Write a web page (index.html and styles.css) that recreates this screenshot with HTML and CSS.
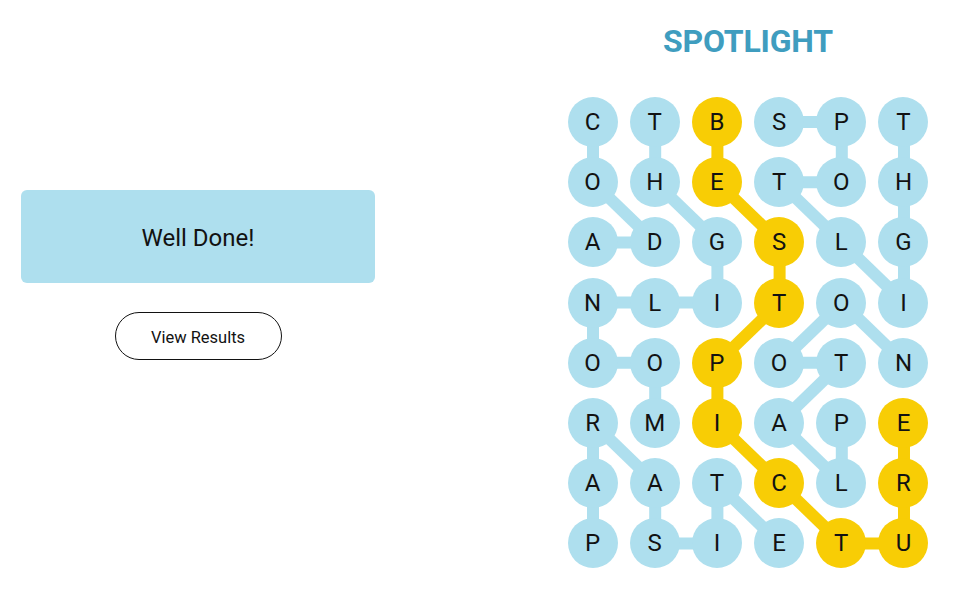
FILE: index.html
```html
<!DOCTYPE html>
<html lang="en">
<head>
    <meta charset="UTF-8">
    <meta name="viewport" content="width=device-width, initial-scale=1.0">
    <title>Strands - Spotlight</title>
    <link rel="stylesheet" href="styles.css">
</head>
<body>
    <div class="game">
        <div class="side">
            <div class="banner">Well Done!</div>
            <button class="btn-results">View Results</button>
        </div>

        <div class="board-wrap">
            <h1 class="theme">SPOTLIGHT</h1>
            <div class="board">
                <svg class="links" width="360" height="470" viewBox="0 0 360 470">
                    <g class="word">
                        <!-- CODA -->
                        <line x1="25" y1="25" x2="25" y2="85.2"/>
                        <line x1="25" y1="85.2" x2="87.2" y2="145.4"/>
                        <line x1="87.2" y1="145.4" x2="25" y2="145.4"/>
                        <!-- MOONLIGHT -->
                        <line x1="87.2" y1="326" x2="87.2" y2="265.8"/>
                        <line x1="87.2" y1="265.8" x2="25" y2="265.8"/>
                        <line x1="25" y1="265.8" x2="25" y2="205.6"/>
                        <line x1="25" y1="205.6" x2="149.4" y2="205.6"/>
                        <line x1="149.4" y1="205.6" x2="149.4" y2="145.4"/>
                        <line x1="149.4" y1="145.4" x2="87.2" y2="85.2"/>
                        <line x1="87.2" y1="85.2" x2="87.2" y2="25"/>
                        <!-- SPOTLIGHT -->
                        <line x1="211.6" y1="25" x2="273.8" y2="25"/>
                        <line x1="273.8" y1="25" x2="273.8" y2="85.2"/>
                        <line x1="273.8" y1="85.2" x2="211.6" y2="85.2"/>
                        <line x1="211.6" y1="85.2" x2="273.8" y2="145.4"/>
                        <line x1="273.8" y1="145.4" x2="336" y2="205.6"/>
                        <line x1="336" y1="205.6" x2="336" y2="25"/>
                        <!-- PARASITE -->
                        <line x1="25" y1="446.4" x2="25" y2="326"/>
                        <line x1="25" y1="326" x2="87.2" y2="386.2"/>
                        <line x1="87.2" y1="386.2" x2="87.2" y2="446.4"/>
                        <line x1="87.2" y1="446.4" x2="149.4" y2="446.4"/>
                        <line x1="149.4" y1="446.4" x2="149.4" y2="386.2"/>
                        <line x1="149.4" y1="386.2" x2="211.6" y2="446.4"/>
                        <!-- PLATOON -->
                        <line x1="273.8" y1="326" x2="273.8" y2="386.2"/>
                        <line x1="273.8" y1="386.2" x2="211.6" y2="326"/>
                        <line x1="211.6" y1="326" x2="273.8" y2="265.8"/>
                        <line x1="273.8" y1="265.8" x2="211.6" y2="265.8"/>
                        <line x1="211.6" y1="265.8" x2="273.8" y2="205.6"/>
                        <line x1="273.8" y1="205.6" x2="336" y2="265.8"/>
                    </g>
                    <g class="spangram">
                        <!-- BESTPICTURE -->
                        <line x1="149.4" y1="25" x2="149.4" y2="85.2"/>
                        <line x1="149.4" y1="85.2" x2="211.6" y2="145.4"/>
                        <line x1="211.6" y1="145.4" x2="211.6" y2="205.6"/>
                        <line x1="211.6" y1="205.6" x2="149.4" y2="265.8"/>
                        <line x1="149.4" y1="265.8" x2="149.4" y2="326"/>
                        <line x1="149.4" y1="326" x2="273.8" y2="446.4"/>
                        <line x1="273.8" y1="446.4" x2="336" y2="446.4"/>
                        <line x1="336" y1="446.4" x2="336" y2="326"/>
                    </g>
                </svg>

                <span class="cell">C</span><span class="cell">T</span><span class="cell gold">B</span><span class="cell">S</span><span class="cell">P</span><span class="cell">T</span>
                <span class="cell">O</span><span class="cell">H</span><span class="cell gold">E</span><span class="cell">T</span><span class="cell">O</span><span class="cell">H</span>
                <span class="cell">A</span><span class="cell">D</span><span class="cell">G</span><span class="cell gold">S</span><span class="cell">L</span><span class="cell">G</span>
                <span class="cell">N</span><span class="cell">L</span><span class="cell">I</span><span class="cell gold">T</span><span class="cell">O</span><span class="cell">I</span>
                <span class="cell">O</span><span class="cell">O</span><span class="cell gold">P</span><span class="cell">O</span><span class="cell">T</span><span class="cell">N</span>
                <span class="cell">R</span><span class="cell">M</span><span class="cell gold">I</span><span class="cell">A</span><span class="cell">P</span><span class="cell gold">E</span>
                <span class="cell">A</span><span class="cell">A</span><span class="cell">T</span><span class="cell gold">C</span><span class="cell">L</span><span class="cell gold">R</span>
                <span class="cell">P</span><span class="cell">S</span><span class="cell">I</span><span class="cell">E</span><span class="cell gold">T</span><span class="cell gold">U</span>
            </div>
        </div>
    </div>
</body>
</html>
```

FILE: styles.css
```css
* {
    margin: 0;
    padding: 0;
    box-sizing: border-box;
}

body {
    font-family: Roboto, "Liberation Sans", Arial, sans-serif;
    color: #121212;
    background: #fff;
}

.game {
    display: flex;
    width: 959px;
    height: 598px;
}

.side {
    width: 354px;
    margin: 190px 0 0 21px;
    display: flex;
    flex-direction: column;
    align-items: center;
}

.banner {
    width: 100%;
    height: 93px;
    padding-top: 3px;
    background: #aedfee;
    border-radius: 6px;
    display: flex;
    align-items: center;
    justify-content: center;
    font-size: 24px;
}

.btn-results {
    margin-top: 29px;
    width: 167px;
    height: 48px;
    padding-top: 3px;
    border: 1px solid #121212;
    border-radius: 24px;
    background: #fff;
    font-family: Roboto, "Liberation Sans", Arial, sans-serif;
    font-size: 16.5px;
    color: #121212;
}

.board-wrap {
    margin: 0 21px 0 auto;
    width: 380px;
    display: flex;
    flex-direction: column;
    align-items: center;
}

.theme {
    margin-top: 23px;
    font-size: 32px;
    font-weight: 700;
    line-height: 37px;
    color: #3f9dbf;
    letter-spacing: -0.2px;
}

.board {
    position: relative;
    margin-top: 37px;
    display: grid;
    grid-template-columns: repeat(6, 50px);
    grid-auto-rows: 50px;
    column-gap: 12.2px;
    row-gap: 10.2px;
}

.links {
    position: absolute;
    left: 0;
    top: 0;
}

.links line {
    stroke-width: 12;
}

.word line {
    stroke: #aedfee;
}

.spangram line {
    stroke: #f8cd05;
}

.cell {
    position: relative;
    width: 50px;
    height: 50px;
    border-radius: 50%;
    background: #aedfee;
    display: flex;
    align-items: center;
    justify-content: center;
    font-size: 24px;
    font-weight: 400;
}

.cell.gold {
    background: #f8cd05;
}
```
